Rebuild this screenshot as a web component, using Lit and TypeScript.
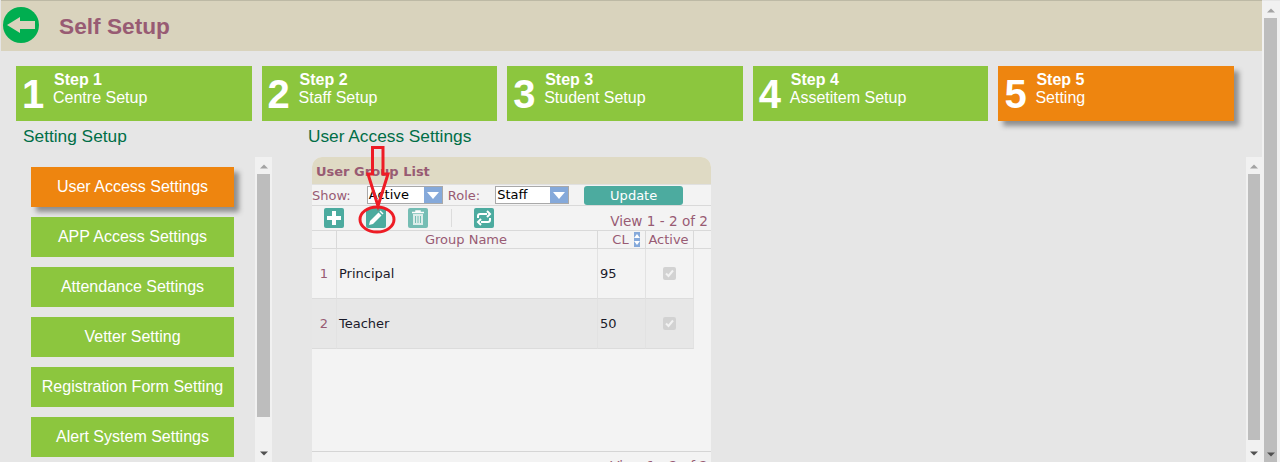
import { LitElement, html, css, svg } from "lit";
import { customElement } from "lit/decorators.js";

const steps = [
  ["1", "Step 1", "Centre Setup"],
  ["2", "Step 2", "Staff Setup"],
  ["3", "Step 3", "Student Setup"],
  ["4", "Step 4", "Assetitem Setup"],
  ["5", "Step 5", "Setting"],
];
const menu = [
  "User Access Settings",
  "APP Access Settings",
  "Attendance Settings",
  "Vetter Setting",
  "Registration Form Setting",
  "Alert System Settings",
];
const rows = [
  ["1", "Principal", "95"],
  ["2", "Teacher", "50"],
];

const scrollbar = (cls: string) => html`
  <div class="sb ${cls}">
    <div class="sb-arrow"><svg width="10" height="6" viewBox="0 0 10 6"><path d="M1 5.500 5 1.500 9 5.500Z" fill="#a3a3a3"/></svg></div>
    <div class="sb-track"><div class="sb-thumb"></div></div>
    <div class="sb-arrow"><svg width="10" height="6" viewBox="0 0 10 6"><path d="M1 .5 5 4.500 9 .5Z" fill="#505050"/></svg></div>
  </div>`;

const select = (label: string, width: number) => html`
  <div class="select" style="width:${width}px">
    <span>${label}</span>
    <i><svg width="12" height="7" viewBox="0 0 12 7"><path d="M0 0H12L6 7Z" fill="#fff"/></svg></i>
  </div>`;

@customElement("app-root")
export class AppRoot extends LitElement {
  static styles = css`
    :host { display: block; width: 1280px; height: 462px; overflow: hidden; background: #e6e6e6; font-family: "Liberation Sans", Arial, sans-serif; }
    .page { display: flex; height: 462px; }
    .main { width: 1262px; flex: none; }
    .top-line { height: 1px; background: #bdb9a5; margin-left: 1px; }
    .header { height: 50px; margin-left: 1px; background: #d9d3bd; display: flex; align-items: center; gap: 20px; padding-left: 2px; box-sizing: border-box; }
    .back { width: 36px; height: 36px; flex: none; display: block; margin-top: -2px; }
    .header h1 { margin: 0; font-size: 22.7px; line-height: 50px; font-weight: 700; color: #985b73; }
    .steps { display: flex; padding: 15px 0 0 16px; }
    .step { width: 235.6px; height: 55px; background: #8cc63e; color: #fff; display: flex; flex: none; box-sizing: border-box; margin-right: 10px; }
    .step.on { background: #ee850f; box-shadow: 5px 5px 5px #8f8f8f; }
    .num { font-size: 40px; font-weight: 700; width: 31px; padding-left: 6px; line-height: 56px; flex: none; }
    .txt { padding: 5px 0 0 0; font-size: 16px; line-height: 18px; }
    .txt b { display: block; margin-left: 1px; }
    .cols { display: flex; }
    .left { width: 272px; flex: none; margin-right: 36px; }
    .right { flex: 1; position: relative; }
    .title { font-size: 17.3px; line-height: 20px; color: #006e46; padding-top: 5px; height: 36px; box-sizing: border-box; }
    .left .title { padding-left: 23px; }
    .left-body { display: flex; height: 305px; overflow: hidden; }
    .menu { width: 203px; margin: 10px 21px 0 31px; display: flex; flex-direction: column; gap: 10px; flex: none; }
    .menu div { height: 40px; flex: none; background: #8cc63e; color: #fff; font-size: 16px; line-height: 40px; text-align: center; }
    .menu div.on { background: #ee850f; box-shadow: 5px 5px 5px #8f8f8f; }
    .sb { width: 17px; flex: none; background: #f1f1f1; display: flex; flex-direction: column; height: 305px; box-sizing: border-box; }
    .sb-arrow { height: 17px; flex: none; display: flex; align-items: center; justify-content: center; }
    .sb-track { flex: 1; padding: 0 2px; display: flex; min-height: 0; }
    .sb-thumb { width: 13px; background: #bdbdbd; }
    .sb.l .sb-thumb { height: 243px; }
    .sb.r .sb-thumb { height: 266px; }
    .sb.r { position: absolute; left: 938px; top: 36px; width: 16px; background: #f1f1f1; }
    .sb.p { width: 18px; height: 462px; margin-top: 1px; }
    .sb.p .sb-thumb { width: 13px; height: 445px; }
    .panel { width: 399px; margin: 0 0 0 4px; height: 305px; background: #f3f3f3; border-radius: 10px 10px 0 0; position: relative; overflow: hidden; font-family: "DejaVu Sans", Verdana, sans-serif; color: #985b73; font-size: 13px; }
    .panel-title { height: 27px; background: #dfdac4; font-weight: 700; font-size: 13px; line-height: 30px; padding-left: 4px; border-bottom: 1px solid #e0e0e0; }
    .filter { height: 21px; display: flex; align-items: center; border-bottom: 1px solid #d9d9d9; box-sizing: border-box; }
    .filter .lbl { flex: none; }
    .select { height: 18px; box-sizing: border-box; border: 1px solid #a9a9a9; background: #fff; display: flex; justify-content: space-between; flex: none; color: #000; line-height: 16px; padding-left: 1px; }
    .select i { width: 18px; background: #85a9da; display: flex; align-items: center; justify-content: center; }
    .update { width: 99px; height: 19px; background: #4cab9f; border-radius: 3px; color: #fff; font-size: 13px; line-height: 19px; text-align: center; flex: none; margin-left: 15px; }
    .tools { height: 25px; display: flex; align-items: center; border-bottom: 1px solid #d9d9d9; box-sizing: border-box; position: relative; padding-left: 12px; }
    .ic { width: 20px; height: 20px; background: #4cab9f; border-radius: 2px; flex: none; display: block; }
    .ic.dim { opacity: .75; }
    .sep { width: 1px; height: 18px; background: #dcdcdc; flex: none; margin: 0 22px 0 23px; }
    .view { margin-left: auto; margin-top: 5px; padding-right: 3px; font-size: 13.6px; }
    .grid { display: grid; grid-template-columns: 25px 261px 48px 48px; width: 399px; }
    .hd { height: 18px; box-sizing: border-box; border-bottom: 1px solid #d9d9d9; border-right: 1px solid #d9d9d9; text-align: center; line-height: 17px; position: relative; padding-right: 2px; }
    .hd.fill { border-right: 0; }
    .grid.h { grid-template-columns: 25px 261px 48px 48px 17px; }
    .sort { position: absolute; left: 36px; top: 1px; display: block; }
    .cell { height: 50px; box-sizing: border-box; border-bottom: 1px solid #dcdcdc; border-right: 1px solid #e2e2e2; line-height: 49px; color: #1a1a2a; padding-left: 2px; }
    .cell.n { color: #985b73; text-align: center; padding: 0; }
    .cell.alt { background: #e7e7e7; }
    .cell.c { padding: 0; display: flex; align-items: center; justify-content: center; }
    .check { width: 13px; height: 13px; border-radius: 2px; background: #d2d2d2; display: flex; align-items: center; justify-content: center; }
    .foot { position: absolute; left: 0; right: 0; top: 294px; border-top: 1px solid #d5d5d5; text-align: right; padding-right: 3px; line-height: 17px; font-size: 13.6px; padding-top: 6px; }
    .mark { position: absolute; left: 50px; top: 24px; width: 40px; height: 92px; pointer-events: none; }
  `;

  render() {
    return html`
      <div class="page">
        <div class="main">
          <div class="top-line"></div>
          <div class="header">
            <svg class="back" viewBox="0 0 36 36"><circle cx="18" cy="18" r="18" fill="#00ae50"/><path d="M4 18 17 10V14H32V22H17V26Z" fill="#d9d3bd"/></svg>
            <h1>Self Setup</h1>
          </div>
          <div class="steps">
            ${steps.map(
              (s, i) => html`
                <div class="step ${i === 4 ? "on" : ""}">
                  <div class="num">${s[0]}</div>
                  <div class="txt"><b>${s[1]}</b>${s[2]}</div>
                </div>`
            )}
          </div>
          <div class="cols">
            <div class="left">
              <div class="title">Setting Setup</div>
              <div class="left-body">
                <div class="menu">${menu.map((m, i) => html`<div class=${i === 0 ? "on" : ""}>${m}</div>`)}</div>
                ${scrollbar("l")}
              </div>
            </div>
            <div class="right">
              <div class="title">User Access Settings</div>
              <div class="panel">
                <div class="panel-title">User Group List</div>
                <div class="filter">
                  <span class="lbl" style="margin:0 16px 0 0">Show:</span>
                  ${select("Active", 76)}
                  <span class="lbl" style="margin:0 15px 0 5px">Role:</span>
                  ${select("Staff", 74)}
                  <div class="update">Update</div>
                </div>
                <div class="tools">
                  <svg class="ic" viewBox="0 0 20 20"><path d="M8 3h4v5h5v4h-5v5H8v-5H3V8h5Z" fill="#fff"/></svg>
                  <svg class="ic" style="margin-left:22px" viewBox="0 0 20 20"><path d="M3 17l1-4L12.500 4.500l3 3L7 16Z" fill="#fff"/><path d="M13.500 3.500l1-1 3 3-1 1Z" fill="#fff"/></svg>
                  <svg class="ic dim" style="margin-left:22px" viewBox="0 0 20 20"><path d="M4 4.500h12M8 4V3h4v1" stroke="#fff" stroke-width="1.500" fill="none"/><path d="M5 6h10v11H5Z" fill="#d5ece8"/><path d="M7.500 8v7M10 8v7M12.500 8v7" stroke="#4cab9f"/></svg>
                  <div class="sep"></div>
                  <svg class="ic" viewBox="0 0 20 20"><path d="M4 10V8a2 2 0 0 1 2-2h7M13 3l3 3-3 3M16 10v2a2 2 0 0 1-2 2H7M7 11l-3 3 3 3" stroke="#fff" stroke-width="2" fill="none"/></svg>
                  <div class="view">View 1 - 2 of 2</div>
                </div>
                <div class="grid h">
                  <div class="hd"></div>
                  <div class="hd">Group Name</div>
                  <div class="hd">CL<svg class="sort" width="6" height="15" viewBox="0 0 6 15"><rect width="6" height="15" fill="#85a9da"/><path d="M0 6 3 2 6 6ZM0 9 3 13 6 9Z" fill="#fff"/></svg></div>
                  <div class="hd">Active</div>
                  <div class="hd fill"></div>
                </div>
                <div class="grid">
                  ${rows.map(
                    (r, i) => html`
                      <div class="cell n ${i ? "alt" : ""}">${r[0]}</div>
                      <div class="cell ${i ? "alt" : ""}">${r[1]}</div>
                      <div class="cell ${i ? "alt" : ""}">${r[2]}</div>
                      <div class="cell c ${i ? "alt" : ""}">
                        <span class="check"><svg width="9" height="9" viewBox="0 0 9 9"><path d="M1 4.500 3.500 7 8 1.500" stroke="#f2f2f2" stroke-width="2" fill="none"/></svg></span>
                      </div>`
                  )}
                </div>
                <div class="foot">View 1 - 2 of 2</div>
              </div>
              ${scrollbar("r")}
              <svg class="mark" viewBox="0 0 40 92">
                ${svg`<g fill="none" stroke="#ee1c25" stroke-width="3"><path d="M14.500 2.500H25V29H30L20 61 10 29H14.500Z"/><ellipse cx="19" cy="74.500" rx="17" ry="12.500"/></g>`}
              </svg>
            </div>
          </div>
        </div>
        ${scrollbar("p")}
      </div>
    `;
  }
}
